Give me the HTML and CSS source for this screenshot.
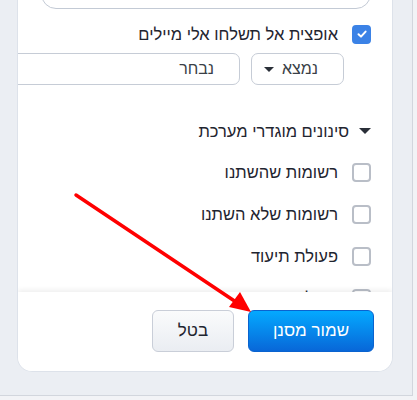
FILE: index.html
```html
<!DOCTYPE html>
<html lang="he">
<head>
  <meta charset="UTF-8">
  <title>מסנן</title>
  <link rel="stylesheet" href="styles.css">
</head>
<body>
  <div class="screen">
    <div class="dialog" dir="rtl">
      <div class="dialog-body">
        <div class="note-box"></div>
        <label class="check-row">
          <span class="box checked">
            <svg width="12" height="12" viewBox="0 0 12 12"><path d="M2.5 6.2 L5 8.6 L9.6 3.6" fill="none" stroke="#fff" stroke-width="2" stroke-linecap="round" stroke-linejoin="round"/></svg>
          </span>
          <span>אופצית אל תשלחו אלי מיילים</span>
        </label>
        <div class="filter-row">
          <div class="select"><span>נמצא</span><span class="caret"></span></div>
          <div class="text-input">נבחר</div>
        </div>
        <div class="section-title"><span class="caret"></span><span>סינונים מוגדרי מערכת</span></div>
        <ul class="filter-list">
          <li class="check-row"><span class="box"></span><span>רשומות שהשתנו</span></li>
          <li class="check-row"><span class="box"></span><span>רשומות שלא השתנו</span></li>
          <li class="check-row"><span class="box"></span><span>פעולת תיעוד</span></li>
          <li class="check-row"><span class="box"></span><span>פעולת תיעוד ידני חדש</span></li>
        </ul>
      </div>
      <div class="dialog-footer">
        <button class="btn btn-primary">שמור מסנן</button>
        <button class="btn btn-cancel">בטל</button>
      </div>
    </div>
    <svg class="arrow" width="417" height="400" viewBox="0 0 417 400">
      <line x1="76" y1="195" x2="236" y2="302" stroke="#ff0000" stroke-width="3.5" stroke-linecap="round"/>
      <polygon points="251,312 229,307 240,292" fill="#ff0000"/>
    </svg>
  </div>
</body>
</html>
```

FILE: styles.css
```css
html, body {
  margin: 0;
  background: #f2f3f6;
}

body {
  font-family: "Liberation Sans", Arial, sans-serif;
  color: #1f2530;
  width: 417px;
  height: 400px;
  overflow: hidden;
}

.screen {
  position: relative;
  width: 395px;
  height: 395px;
  padding-left: 17px;
  background: #ebeef3;
  border-right: 1px solid #d2d6dd;
  border-bottom: 1px solid #d2d6dd;
}

.dialog {
  width: 376px;
  height: 372px;
  box-sizing: border-box;
  background: #fff;
  border-left: 1px solid #dde2ea;
  border-right: 1px solid #dde2ea;
  border-bottom: 1px solid #dde2ea;
  border-radius: 0 0 15px 15px;
  display: flex;
  flex-direction: column;
  overflow: hidden;
}

.dialog-body {
  flex: 1;
  overflow: hidden;
  padding-right: 21px;
}

.note-box {
  box-sizing: border-box;
  height: 30px;
  margin-top: -21px;
  margin-left: 25px;
  width: 330px;
  border: 1px solid #c3cad5;
  border-radius: 18px;
}

.check-row {
  display: flex;
  align-items: center;
  gap: 14px;
  height: 20px;
  font-size: 16.5px;
}

label.check-row {
  margin-top: 15px;
}

.box {
  box-sizing: border-box;
  width: 19px;
  height: 19px;
  border: 2px solid #b9bec7;
  border-radius: 4px;
  flex: none;
  display: flex;
  align-items: center;
  justify-content: center;
}

.box.checked {
  background: #3b82e6;
  border-color: #3b82e6;
}

.filter-row {
  display: flex;
  gap: 11px;
  margin-top: 9px;
  margin-right: 27px;
}

.select, .text-input {
  box-sizing: border-box;
  height: 32px;
  border: 1px solid #c6ccd6;
  border-radius: 7px;
  font-size: 16px;
  color: #3a3f47;
  display: flex;
  align-items: center;
  padding-right: 25px;
  flex: none;
}

.select {
  width: 93px;
  justify-content: space-between;
  padding-left: 12px;
}

.text-input {
  width: 260px;
}

.caret {
  width: 0;
  height: 0;
  border-left: 5px solid transparent;
  border-right: 5px solid transparent;
  border-top: 5px solid #2a2f38;
}

.section-title {
  display: flex;
  align-items: center;
  gap: 10px;
  height: 20px;
  margin-top: 36px;
  font-size: 16.5px;
}

.section-title .caret {
  border-left-width: 6px;
  border-right-width: 6px;
  border-top-width: 6px;
}

.filter-list {
  list-style: none;
  margin: 21px 0 0;
  padding: 0;
  display: flex;
  flex-direction: column;
  gap: 22px;
}

.dialog-footer {
  position: relative;
  height: 79px;
  flex: none;
  box-sizing: border-box;
  padding: 18px 18px 0;
  display: flex;
  gap: 14px;
  background: #fff;
  box-shadow: 0 -2px 5px rgba(0, 0, 0, 0.07);
}

.btn {
  height: 42px;
  border-radius: 6px;
  font-family: inherit;
  font-size: 17px;
  padding: 0;
}

.btn-primary {
  width: 126px;
  color: #fff;
  border: 1px solid #0a63cf;
  background: linear-gradient(#04a9ff, #0867d8);
}

.btn-cancel {
  width: 82px;
  color: #1f2530;
  border: 1px solid #c9ced8;
  background: linear-gradient(#fafbfc, #eaedf2);
}

.arrow {
  position: absolute;
  left: 0;
  top: 0;
  pointer-events: none;
}
```
